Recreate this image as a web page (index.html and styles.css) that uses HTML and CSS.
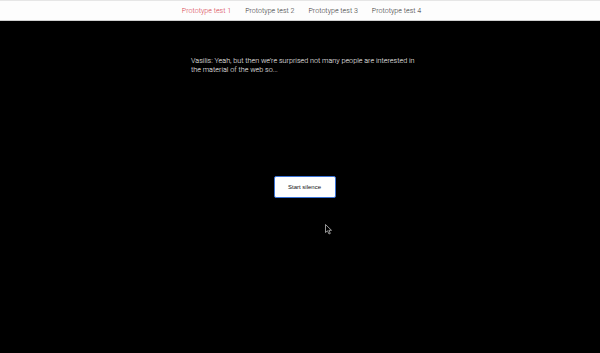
FILE: index.html
```html
<!DOCTYPE html>
<html>
<head>
<meta charset="utf-8">
<link rel="stylesheet" href="styles.css">
</head>
<body>
<nav class="nav">
  <a class="nav-item active">Prototype test 1</a>
  <a class="nav-item">Prototype test 2</a>
  <a class="nav-item">Prototype test 3</a>
  <a class="nav-item">Prototype test 4</a>
</nav>
<main class="stage">
  <p class="caption">Vasilis: Yeah, but then we’re surprised not many people are interested in the material of the web so...</p>
  <button class="btn">Start silence</button>
</main>
<svg class="cursor" width="8" height="11" viewBox="0 0 8 11"><path d="M0.5 0.5 L0.5 8.5 L2.5 6.8 L4 10 L5.3 9.4 L3.9 6.3 L6.5 6.3 Z" fill="#000" stroke="#bbb" stroke-width="0.8"/></svg>
</body>
</html>
```
FILE: styles.css
```css
html, body {
  margin: 0;
  padding: 0;
  background: #000;
  height: 100%;
  overflow: hidden;
}
body {
  font-family: Roboto, "Liberation Sans", sans-serif;
  position: relative;
  -webkit-font-smoothing: antialiased;
}
.nav {
  height: 19px;
  background: #fdfdfd;
  border-top: 1px solid #e6e6e6;
  border-bottom: 1px solid #cfcfcf;
  display: flex;
  justify-content: center;
  align-items: center;
  gap: 14px;
  padding-left: 3px;
}
.nav-item {
  font-size: 7.1px;
  font-weight: 300;
  color: #333;
  text-decoration: none;
}
.nav-item.active {
  color: #d8414f;
}
.stage {
  display: flex;
  flex-direction: column;
  align-items: center;
}
.caption {
  width: 226px;
  margin: 35px 0 0 8px;
  color: #fff;
  font-size: 7.2px;
  font-weight: 300;
  line-height: 9px;
}
.btn {
  margin: 102px 0 0 9px;
  width: 62px;
  height: 22px;
  background: #fff;
  border: 1.5px solid #3b73d6;
  border-radius: 2px;
  font-family: "Liberation Sans", Arial, sans-serif;
  font-size: 6px;
  color: #111;
  padding: 0;
}
.cursor {
  position: absolute;
  left: 325px;
  top: 224px;
}
```
